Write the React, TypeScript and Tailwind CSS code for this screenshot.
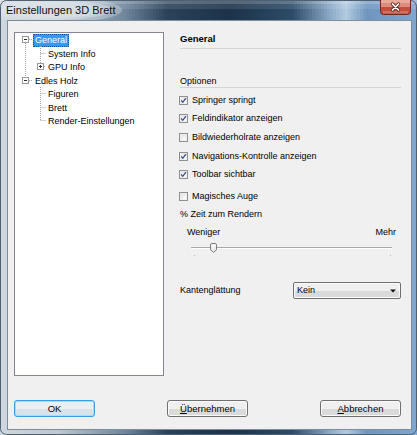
import React from "react";

function CheckBox({ checked }: { checked: boolean }) {
  return (
    <svg width="9" height="9" viewBox="0 0 9 9" className="shrink-0">
      <rect x="0.5" y="0.5" width="8" height="8" fill="#f7f7f7" stroke="#8e8f8f" />
      <rect x="1.5" y="1.5" width="6" height="6" fill="#e4e4e4" />
      <rect x="2.5" y="2.5" width="5" height="5" fill="#eeeeee" />
      <rect x="4" y="4" width="3.5" height="3.5" fill="#f6f6f6" />
      {checked && (
        <path d="M2.2 4.4 L3.8 6.3 L6.9 2.2" stroke="#3b4d85" strokeWidth="1.3" fill="none" />
      )}
    </svg>
  );
}

function Option({ label, checked, className }: { label: string; checked: boolean; className: string }) {
  return (
    <div className={`flex h-[13px] items-center gap-[4px] ml-[-1px] ${className}`}>
      <CheckBox checked={checked} />
      <span>{label}</span>
    </div>
  );
}

// tree view connectors and +/- boxes
function TreeLines() {
  const dot = { stroke: "#a3a3a3", strokeDasharray: "1 1", strokeWidth: 1 };
  const box = (x: number, y: number, open: boolean) => (
    <g>
      <rect x={x + 0.5} y={y + 0.5} width="6" height="6" fill="#fdfdfd" stroke="#9a9a9a" />
      <path d={`M${x + 2} ${y + 3.5} H${x + 5}`} stroke="#2b2b2b" />
      {!open && <path d={`M${x + 3.5} ${y + 2} V${y + 5}`} stroke="#2b2b2b" />}
    </g>
  );
  return (
    <svg width="60" height="100" className="absolute left-0 top-0">
      {/* root level */}
      <path d="M10.5 10 V44" {...dot} />
      <path d="M14 6.5 H18" {...dot} />
      <path d="M14 47.5 H18" {...dot} />
      {/* children of General */}
      <path d="M25.5 13 V30" {...dot} />
      <path d="M25.5 20.5 H31" {...dot} />
      <path d="M29 33.5 H31" {...dot} />
      {/* children of Edles Holz */}
      <path d="M25.5 54 V88" {...dot} />
      <path d="M25.5 60.5 H31" {...dot} />
      <path d="M25.5 74.5 H31" {...dot} />
      <path d="M25.5 87.5 H31" {...dot} />
      {box(7, 3, true)}
      {box(22, 30, false)}
      {box(7, 44, true)}
    </svg>
  );
}

function TreeRow({ label, level, tall, selected }: { label: string; level: number; tall?: boolean; selected?: boolean }) {
  return (
    <div className={`flex items-center ${tall ? "h-[14px]" : "h-[13px]"} ${level === 0 ? "pl-[18px]" : "pl-[31px]"}`}>
      <span
        className={
          selected
            ? "px-[1px] leading-[11px] bg-[#3399ff] text-white border border-dotted border-[#1a4f8f]"
            : "px-[1px] leading-[11px] border border-transparent"
        }
      >
        {label}
      </span>
    </div>
  );
}

// glass colours across the frame, left to right
const glassStops: [number, string][] = [
  [0, "#cfd7de"],
  [0.14, "#bcc7d0"],
  [0.3, "#6f869c"],
  [0.4, "#2a4359"],
  [0.55, "#1c3349"],
  [0.7, "#2d4b68"],
  [0.79, "#8aa8c6"],
  [0.83, "#b3cbe0"],
  [0.88, "#6f96bf"],
  [1, "#7ea6cf"],
];

function mix(t: number) {
  let i = 0;
  while (i < glassStops.length - 2 && t > glassStops[i + 1][0]) i++;
  const [t0, c0] = glassStops[i];
  const [t1, c1] = glassStops[i + 1];
  const k = Math.min(1, Math.max(0, (t - t0) / (t1 - t0)));
  const ch = (c: string, o: number) => parseInt(c.slice(o, o + 2), 16);
  const out = [1, 3, 5].map((o) => Math.round(ch(c0, o) + (ch(c1, o) - ch(c0, o)) * k));
  return `rgb(${out.join(",")})`;
}

function Glass() {
  const strips = [];
  for (let x = 0; x < 417; x += 3) {
    strips.push(<rect key={x} x={x} y={0} width={3.5} height={435} fill={mix((x + 1.5) / 417)} />);
  }
  return (
    <svg className="absolute left-0 top-0" width="417" height="435" viewBox="0 0 417 435">
      {strips}
      <rect x="0" y="0" width="417" height="4" fill="#ffffff" opacity="0.25" />
      <rect x="0" y="4" width="417" height="5" fill="#ffffff" opacity="0.1" />
      <ellipse cx="52" cy="10" rx="70" ry="13" fill="#dfe5ea" opacity="0.35" />
      <ellipse cx="52" cy="10" rx="60" ry="10" fill="#dfe5ea" opacity="0.4" />
      <ellipse cx="52" cy="10" rx="52" ry="8" fill="#dfe5ea" opacity="0.5" />
      <rect x="0.5" y="0.5" width="416" height="434" rx="6" fill="none" stroke="#4f6071" />
    </svg>
  );
}

function CloseButton() {
  return (
    <svg width="31" height="15" viewBox="0 0 31 15" className="shrink-0">
      <path d="M0.5 0 V11.5 Q0.5 14.5 3.5 14.5 H27.5 Q30.5 14.5 30.5 11.5 V0 Z" fill="#c34d3f" stroke="#6b2a22" />
      <rect x="1" y="0" width="29" height="7" fill="#dd8d7b" />
      <rect x="1" y="0" width="29" height="3" fill="#e8a998" />
      <rect x="3" y="11" width="25" height="2.5" fill="#d0705e" />
      <path d="M12.5 4 L18.5 10 M18.5 4 L12.5 10" stroke="#5a2a22" strokeWidth="3.2" strokeLinecap="round" />
      <path d="M12.5 4 L18.5 10 M18.5 4 L12.5 10" stroke="#ffffff" strokeWidth="1.7" strokeLinecap="round" />
    </svg>
  );
}

function Button({ children, primary }: { children: React.ReactNode; primary?: boolean }) {
  return (
    <button
      className={
        primary
          ? "w-[81px] h-[17px] rounded-[3px] border border-[#3a9ee0] bg-[#d8e2ea] shadow-[inset_0_0_0_1px_#a6dcf8,inset_0_7px_0_1px_#e8f0f5] text-[9.5px] leading-none text-black"
          : "w-[81px] h-[17px] rounded-[3px] border border-[#707070] bg-[#dadada] shadow-[inset_0_0_0_1px_#fbfbfb,inset_0_7px_0_1px_#efefef] text-[9.5px] leading-none text-black"
      }
    >
      {children}
    </button>
  );
}

export default function App() {
  return (
    <div className="relative w-[417px] h-[435px] flex flex-col font-['Liberation_Sans_Narrow','Liberation_Sans',Arial,sans-serif] text-black">
      <Glass />

      {/* title bar */}
      <div className="relative h-[20px] shrink-0 flex items-start justify-between pl-[6px] pr-[6px]">
        <span className="mt-[4px] text-[11px] leading-[13px] text-[#111]">Einstellungen 3D Brett</span>
        <CloseButton />
      </div>

      {/* client area */}
      <div className="relative ml-[7px] mr-[5px] mb-[5px] flex-1 border border-[#7d8c9b] bg-[#f0f0f0] flex flex-col pl-[6px] pr-[10px] pt-[11px] text-[9px] leading-[13px]">
        <div className="flex h-[344px]">
          {/* tree */}
          <div className="relative w-[150px] h-full border border-[#828790] bg-white pt-[1px]">
            <TreeLines />
            <TreeRow label="General" level={0} selected />
            <TreeRow label="System Info" level={1} tall />
            <TreeRow label="GPU Info" level={1} />
            <TreeRow label="Edles Holz" level={0} tall />
            <TreeRow label="Figuren" level={1} />
            <TreeRow label="Brett" level={1} tall />
            <TreeRow label="Render-Einstellungen" level={1} />
          </div>

          {/* settings page */}
          <div className="flex-1 ml-[16px] flex flex-col">
            <div className="h-[13px] font-bold text-[9.5px]">General</div>
            <div className="mt-[3px] h-px bg-[#d5d5d5]" />

            <div className="mt-[26px] h-[12px] leading-[12px]">Optionen</div>
            <div className="h-px bg-[#d5d5d5]" />

            <Option label="Springer springt" checked className="mt-[6px]" />
            <Option label="Feldindikator anzeigen" checked className="mt-[5px]" />
            <Option label="Bildwiederholrate anzeigen" checked={false} className="mt-[6px]" />
            <Option label="Navigations-Kontrolle anzeigen" checked className="mt-[6px]" />
            <Option label="Toolbar sichtbar" checked className="mt-[5px]" />
            <Option label="Magisches Auge" checked={false} className="mt-[9px]" />

            <div className="mt-[5px] h-[13px]">% Zeit zum Rendern</div>
            <div className="mt-[5px] h-[13px] flex justify-between pl-[7px] pr-[5px]">
              <span>Weniger</span>
              <span>Mehr</span>
            </div>

            {/* trackbar */}
            <div className="relative ml-[11px] w-[201px] h-[20px]">
              <div className="mt-[8px] h-px bg-[#a8a8a8]" />
              <div className="h-px bg-white" />
              <svg width="7" height="10" viewBox="0 0 7 10" className="absolute left-[19px] top-[4px]">
                <path
                  d="M0.5 1.8 Q0.5 0.5 1.8 0.5 H5.2 Q6.5 0.5 6.5 1.8 V6.8 L3.5 9.3 L0.5 6.8 Z"
                  fill="#ececec"
                  stroke="#7c7c7c"
                />
                <path d="M1.5 2 H5.5 V4 H1.5 Z" fill="#fafafa" />
              </svg>
              <div className="absolute left-[3px] top-[16px] w-px h-px bg-[#b5b5b5]" />
              <div className="absolute left-[199px] top-[16px] w-px h-px bg-[#b5b5b5]" />
            </div>

            <div className="mt-[23px] flex items-center h-[17px]">
              <span className="w-[113px]">Kantenglättung</span>
              <div className="flex-1 h-[17px] rounded-[2px] border border-[#707070] bg-[#dadada] shadow-[inset_0_0_0_1px_#fbfbfb,inset_0_7px_0_1px_#efefef] flex items-center justify-between pl-[3px] pr-[4px]">
                <span>Kein</span>
                <svg width="6" height="4" viewBox="0 0 6 4">
                  <path d="M0 0.5 H6 L3 3.5 Z" fill="#111" />
                </svg>
              </div>
            </div>
          </div>
        </div>

        {/* dialog buttons */}
        <div className="mt-[24px] flex justify-between">
          <Button primary>OK</Button>
          <Button>
            <span className="underline">Ü</span>bernehmen
          </Button>
          <Button>
            <span className="underline">A</span>bbrechen
          </Button>
        </div>
      </div>
    </div>
  );
}
